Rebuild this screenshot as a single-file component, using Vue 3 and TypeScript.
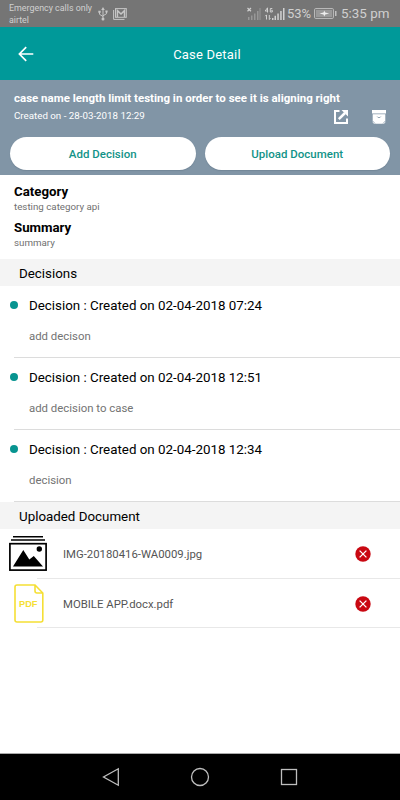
<script setup lang="ts">
interface Decision {
  title: string
  note: string
}
interface DocumentItem {
  name: string
  kind: 'image' | 'pdf'
}

const details = [
  { label: 'Category', value: 'testing category api' },
  { label: 'Summary', value: 'summary' },
]
const decisions: Decision[] = [
  { title: 'Decision : Created on 02-04-2018 07:24', note: 'add decison' },
  { title: 'Decision : Created on 02-04-2018 12:51', note: 'add decision to case' },
  { title: 'Decision : Created on 02-04-2018 12:34', note: 'decision' },
]
const documents: DocumentItem[] = [
  { name: 'IMG-20180416-WA0009.jpg', kind: 'image' },
  { name: 'MOBILE APP.docx.pdf', kind: 'pdf' },
]
</script>

<template>
  <div class="screen">
    <div class="status">
      <div class="carrier"><span>Emergency calls only</span><span>airtel</span></div>
      <svg class="usb" width="10" height="14" viewBox="0 0 10 14" fill="none" stroke="#c6c6c6">
        <path d="M5 2v10M1.500 5v2.300L5 9.500M8.500 4.500v2.200L5 8.800" />
        <path d="M5 0l1.800 3H3.200zM.3 3.800h2.400v2H.3zM7.400 3.500h2.200v2H7.400z" fill="#c6c6c6" stroke="none" />
        <circle cx="5" cy="12" r="1.500" fill="#c6c6c6" stroke="none" />
      </svg>
      <svg class="mail" width="14" height="12" viewBox="0 0 14 12" fill="none" stroke="#c6c6c6">
        <path d="M.6 2v9.400H11.500" />
        <rect x="2.500" y=".6" width="10.800" height="8.700" />
        <path d="M4.400 9V2.600L8 6l3.500-3.400V9" stroke-width="1.500" />
      </svg>
      <span class="spacer"></span>
      <svg class="signals" width="38" height="14" viewBox="0 0 38 14">
        <path d="M.5 1l3.500 3.300M4 1L.5 4.300" stroke="#d0d0d0" stroke-width="1.200" />
        <path d="M1 10h1.500v3H1zM4 8.500h1.500V13H4zM7 6.500h1.500V13H7zM10 4h1.500v9H10zM12.500 1H13.500v12h-1z" fill="#989898" />
        <path d="M20.500 5.500V.8L18.200 4h3M25.300 1.500h-2v3.500h2V3.300h-1" stroke="#d0d0d0" fill="none" />
        <path d="M19.500 8v4.500M18.300 9.200l1.200-1.400M22.300 8v4.500M23.500 11.200l-1.200 1.400" stroke="#d0d0d0" fill="none" />
        <path d="M25 11h1.500v2H25zM27.500 8.800H29V13h-1.500zM30.300 6.500h1.500V13h-1.500zM33.200 4h1.500v9h-1.500zM36 1h1.500v12H36z" fill="#d0d0d0" />
      </svg>
      <span class="percent">53%</span>
      <svg class="battery" width="23" height="11" viewBox="0 0 23 11">
        <rect x=".6" y=".6" width="18.800" height="9.800" rx="1" fill="none" stroke="#c0c0c0" />
        <rect x="2" y="2" width="16" height="7" fill="#999" />
        <path d="M5.500 5.500l4-1 .8-2 .9 2 4 1-4 1-.9 2-.8-2z" fill="#eee" />
        <path d="M21 3h1.500v5H21z" fill="#c0c0c0" />
      </svg>
      <span class="clock">5:35 pm</span>
    </div>

    <header class="appbar">
      <svg class="back" width="16" height="16" viewBox="0 0 16 16" fill="none" stroke="#fff" stroke-width="1.700">
        <path d="M15.300 8H1.500M8.200 1.200L1.400 8l6.800 6.800" />
      </svg>
      <h1>Case Detail</h1>
    </header>

    <section class="case">
      <h2>case name length limit testing in order to see it is aligning right</h2>
      <div class="meta">
        <span>Created on - 28-03-2018 12:29</span>
        <div class="tools">
          <svg width="16" height="16" viewBox="0 0 16 16">
            <path d="M6.500 2H2v12h12V9.500" fill="none" stroke="#fff" stroke-width="2" />
            <path d="M5.800 10.200L12 4" stroke="#fff" stroke-width="2.500" />
            <path d="M8.500 1H15v6.500z" fill="#fff" />
          </svg>
          <svg width="16" height="16" viewBox="0 0 16 16">
            <path d="M1 1h14v3.600H1zM1.700 5.300h12.600V13.500l-1.300 1.300H3l-1.300-1.300z" fill="#fff" />
            <path d="M6.200 7.500l.8 1h2l.8-1" fill="none" stroke="#8195a6" stroke-width=".8" />
            <path d="M1.700 12l2.300 2.500M14.300 12L12 14.500" stroke="#8195a6" stroke-width=".7" />
          </svg>
        </div>
      </div>
      <div class="actions">
        <button type="button">Add Decision</button>
        <button type="button">Upload Document</button>
      </div>
    </section>

    <dl class="details">
      <div v-for="d in details" :key="d.label">
        <dt>{{ d.label }}</dt>
        <dd>{{ d.value }}</dd>
      </div>
    </dl>

    <h3 class="section">Decisions</h3>
    <ul class="decisions">
      <li v-for="d in decisions" :key="d.title">
        <i class="dot"></i>
        <div class="entry">
          <p class="title">{{ d.title }}</p>
          <p class="note">{{ d.note }}</p>
        </div>
      </li>
    </ul>

    <h3 class="section">Uploaded Document</h3>
    <ul class="documents">
      <li v-for="doc in documents" :key="doc.name">
        <div class="thumb">
          <svg v-if="doc.kind === 'image'" width="38" height="35" viewBox="0 0 38 35">
            <path d="M4 .8h30M2 4h34" stroke="#000" stroke-width="1.400" />
            <rect x=".9" y="7.700" width="36.200" height="26.400" fill="none" stroke="#000" stroke-width="1.700" />
            <path d="M4 30.500l10.300-16.500 6 9.500 4.500-3.500L34 30.500z" />
            <circle cx="30.300" cy="13" r="2.700" />
          </svg>
          <svg v-else class="pdf-icon" width="30" height="39" viewBox="0 0 30 39">
            <path d="M3 1h18l7.800 8v27a2 2 0 0 1-2 2H3a2 2 0 0 1-2-2V3a2 2 0 0 1 2-2zM21 1.500V7a2 2 0 0 0 2 2h5.500" fill="none" stroke="#f5df35" stroke-width="1.600" />
            <text x="14.200" y="22.700" text-anchor="middle" class="pdf">PDF</text>
          </svg>
        </div>
        <span class="name">{{ doc.name }}</span>
        <svg class="remove" width="16" height="16" viewBox="0 0 16 16">
          <circle cx="8" cy="8" r="7.700" fill="#c90812" />
          <path d="M4.600 4.600l6.800 6.800M11.400 4.600l-6.800 6.800" stroke="#fff" stroke-width="1.300" />
        </svg>
      </li>
    </ul>

    <nav class="nav">
      <svg width="18" height="20" viewBox="0 0 18 20"><path d="M16.300 1.800v16.400L1.500 10z" /></svg>
      <svg width="20" height="20" viewBox="0 0 20 20"><circle cx="10" cy="10" r="8.500" /></svg>
      <svg width="18" height="18" viewBox="0 0 18 18"><rect x="1.500" y="1.500" width="15" height="15" /></svg>
    </nav>
  </div>
</template>

<style>
body {
  margin: 0;
}
</style>

<style scoped>
.screen {
  width: 400px;
  height: 800px;
  display: flex;
  flex-direction: column;
  overflow: hidden;
  background: #fff;
  color: #000;
  font-family: Roboto, "Liberation Sans", sans-serif;
}
h1, h2, h3, p, ul, dl, dd {
  margin: 0;
  padding: 0;
}
ul {
  list-style: none;
}
svg {
  display: block;
  flex: none;
}
.status {
  height: 27px;
  flex: none;
  box-sizing: border-box;
  padding: 0 11px 0 9px;
  display: flex;
  align-items: center;
  background: #757575;
  color: #d0d0d0;
  white-space: nowrap;
}
.carrier {
  width: 89px;
  display: flex;
  flex-direction: column;
  font-size: 8.9px;
  line-height: 12px;
}
.mail {
  margin-left: 5px;
}
.spacer {
  flex: 1;
}
.percent {
  width: 24px;
  margin-left: 2px;
  font-size: 13px;
}
.battery {
  margin-left: 3px;
}
.clock {
  width: 48px;
  margin-left: 4px;
  font-size: 13.4px;
}
.appbar {
  height: 53px;
  flex: none;
  display: grid;
  grid-template-columns: 44px 1fr 30px;
  align-items: center;
  background: #009999;
  color: #fff;
}
.back {
  justify-self: end;
  margin-right: 10px;
}
h1 {
  padding-top: 2px;
  text-align: center;
  font-size: 13px;
  font-weight: 400;
  line-height: 16px;
  letter-spacing: 0.2px;
}
.case {
  height: 95px;
  flex: none;
  box-sizing: border-box;
  padding: 11px 10px 0;
  background: #8195a6;
  color: #fff;
}
h2 {
  padding-left: 4px;
  font-size: 11.5px;
  font-weight: 700;
  line-height: 14px;
  white-space: nowrap;
}
.meta {
  height: 32px;
  display: flex;
  justify-content: space-between;
  padding: 4px 3px 0 4px;
  box-sizing: border-box;
  font-size: 9.75px;
  line-height: 13px;
}
.tools {
  display: flex;
  gap: 22px;
}
.actions {
  display: flex;
  gap: 9px;
}
button {
  flex: 1;
  height: 33px;
  padding: 0;
  border: 0;
  border-radius: 17px;
  background: #fff;
  box-shadow: 0 1px 1px #63778a80;
  color: #129388;
  font: 500 11.5px/14px Roboto, "Liberation Sans", sans-serif;
}
.details {
  height: 84px;
  flex: none;
  box-sizing: border-box;
  padding: 9px 14px 0;
}
.details div {
  height: 36px;
}
dt {
  font-size: 13.25px;
  font-weight: 700;
  line-height: 16px;
}
dd {
  font-size: 9.75px;
  line-height: 14px;
  color: #707070;
}
.section {
  height: 27px;
  flex: none;
  padding-left: 19px;
  background: #f4f4f4;
  font-size: 13.35px;
  font-weight: 400;
  line-height: 29px;
}
.decisions li {
  height: 72px;
  display: flex;
}
.dot {
  width: 8px;
  height: 8px;
  margin: 15px -4px 0 10px;
  border-radius: 50%;
  background: #079490;
}
.entry {
  flex: 1;
  padding: 11px 0 0 15px;
  border-bottom: 1px solid #dcdcdc;
}
.title {
  font-size: 13.35px;
  line-height: 17px;
}
.note {
  margin-top: 15px;
  font-size: 11.4px;
  line-height: 15px;
  color: #737373;
}
.documents li {
  height: 49px;
  display: flex;
  align-items: center;
  background: linear-gradient(#e8e8e8, #e8e8e8) 37px 100% / 363px 1px no-repeat;
}
.documents li:first-child {
  height: 50px;
  box-sizing: border-box;
  padding-bottom: 1px;
}
.thumb {
  width: 38px;
  margin: 0 16px 0 9px;
  display: flex;
  justify-content: center;
}
.pdf-icon {
  margin-left: 1px;
}
.pdf {
  fill: #f5df35;
  font: 700 9.2px "Liberation Sans", sans-serif;
}
.name {
  flex: 1;
  padding-top: 2px;
  font-size: 11.35px;
  line-height: 15px;
  color: #555;
}
.remove {
  margin-right: 29px;
}
.nav {
  height: 47px;
  margin-top: auto;
  flex: none;
  box-sizing: border-box;
  padding: 0 102px;
  border-top: 1px solid #aaa;
  display: flex;
  align-items: center;
  justify-content: space-between;
  background: #000;
}
.nav svg {
  fill: none;
  stroke: #bebebe;
  stroke-width: 1.3;
}
</style>
